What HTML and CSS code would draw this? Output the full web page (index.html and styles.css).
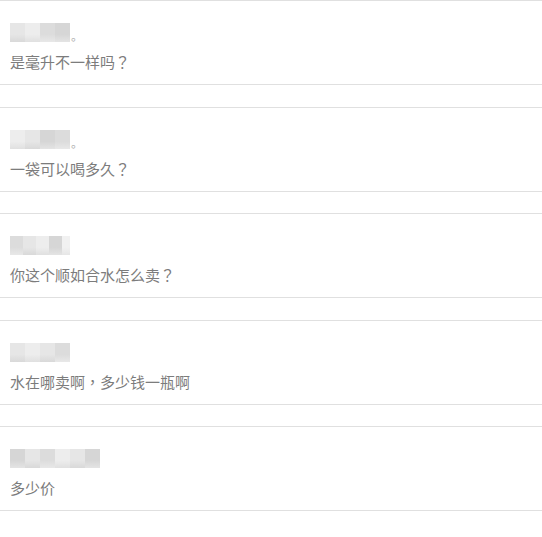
FILE: index.html
```html
<!DOCTYPE html>
<html lang="zh-CN">
<head>
    <meta charset="UTF-8">
    <meta name="viewport" content="width=device-width, initial-scale=1.0">
    <title>留言</title>
    <link rel="stylesheet" href="styles.css">
</head>
<body>

    <div class="comment-list">

        <div class="comment">
            <div class="comment-name">
                <span class="mosaic">
                    <i class="m1"></i><i class="m2"></i><i class="m3"></i><i class="m4"></i>
                </span>
                <span class="name-tail">。</span>
            </div>
            <p class="comment-text">是毫升不一样吗<span class="punct" lang="zh-TW">？</span></p>
        </div>

        <div class="comment">
            <div class="comment-name">
                <span class="mosaic">
                    <i class="m2"></i><i class="m1"></i><i class="m4"></i><i class="m3"></i>
                </span>
                <span class="name-tail">。</span>
            </div>
            <p class="comment-text">一袋可以喝多久<span class="punct" lang="zh-TW">？</span></p>
        </div>

        <div class="comment">
            <div class="comment-name">
                <span class="mosaic">
                    <i class="m3"></i><i class="m1"></i><i class="m2"></i><i class="m4"></i><i class="m5"></i>
                </span>
            </div>
            <p class="comment-text">你这个顺如合水怎么卖<span class="punct" lang="zh-TW">？</span></p>
        </div>

        <div class="comment">
            <div class="comment-name">
                <span class="mosaic">
                    <i class="m1"></i><i class="m2"></i><i class="m1"></i><i class="m3"></i>
                </span>
            </div>
            <p class="comment-text">水在哪卖啊<span class="punct" lang="zh-TW">，</span>多少钱一瓶啊</p>
        </div>

        <div class="comment">
            <div class="comment-name">
                <span class="mosaic mosaic-wide">
                    <i class="m4"></i><i class="m1"></i><i class="m3"></i><i class="m2"></i><i class="m1"></i><i class="m4"></i>
                </span>
            </div>
            <p class="comment-text">多少价</p>
        </div>

    </div>

</body>
</html>
```

FILE: styles.css
```css
body {
    margin: 0;
    background: #fff;
    font-family: "Microsoft YaHei", "Noto Sans CJK SC", "Noto Sans", sans-serif;
}

.comment-list {
    display: flex;
    flex-direction: column;
}

.comment {
    height: 83px;
    margin-bottom: 21.5px;
    padding: 0 10px;
    border-top: 1px solid #e0e0e0;
    border-bottom: 1px solid #e0e0e0;
    box-sizing: content-box;
    background: #fff;
}

.comment-name {
    display: flex;
    align-items: flex-end;
    margin-top: 22px;
    height: 19px;
}

/* blurred nickname */
.mosaic {
    display: flex;
    width: 60px;
    height: 19px;
    overflow: hidden;
    filter: blur(0.6px);
}

.mosaic-wide {
    width: 90px;
}

.mosaic i {
    flex: 1;
    height: 100%;
}

.mosaic .m1 { background: linear-gradient(to bottom, #e6e6e6 60%, #d9d9d9); }
.mosaic .m2 { background: linear-gradient(to bottom, #ededed 60%, #e0e0e0); }
.mosaic .m3 { background: linear-gradient(to bottom, #dcdcdc 60%, #e8e8e8); }
.mosaic .m4 { background: linear-gradient(to bottom, #d6d6d6 60%, #e4e4e4); }
.mosaic .m5 { background: linear-gradient(to bottom, #f1f1f1 60%, #e6e6e6); flex: 0.6; }

.name-tail {
    font-size: 12px;
    line-height: 12px;
    color: #b0b0b0;
    margin-left: 1px;
}

.comment-text {
    margin: 10px 0 0;
    font-size: 15px;
    line-height: 20px;
    color: #7c7c7c;
    text-spacing-trim: space-all;
}

/* centred full-width punctuation */
.punct {
    font-family: "Noto Sans CJK TC", sans-serif;
}
```
